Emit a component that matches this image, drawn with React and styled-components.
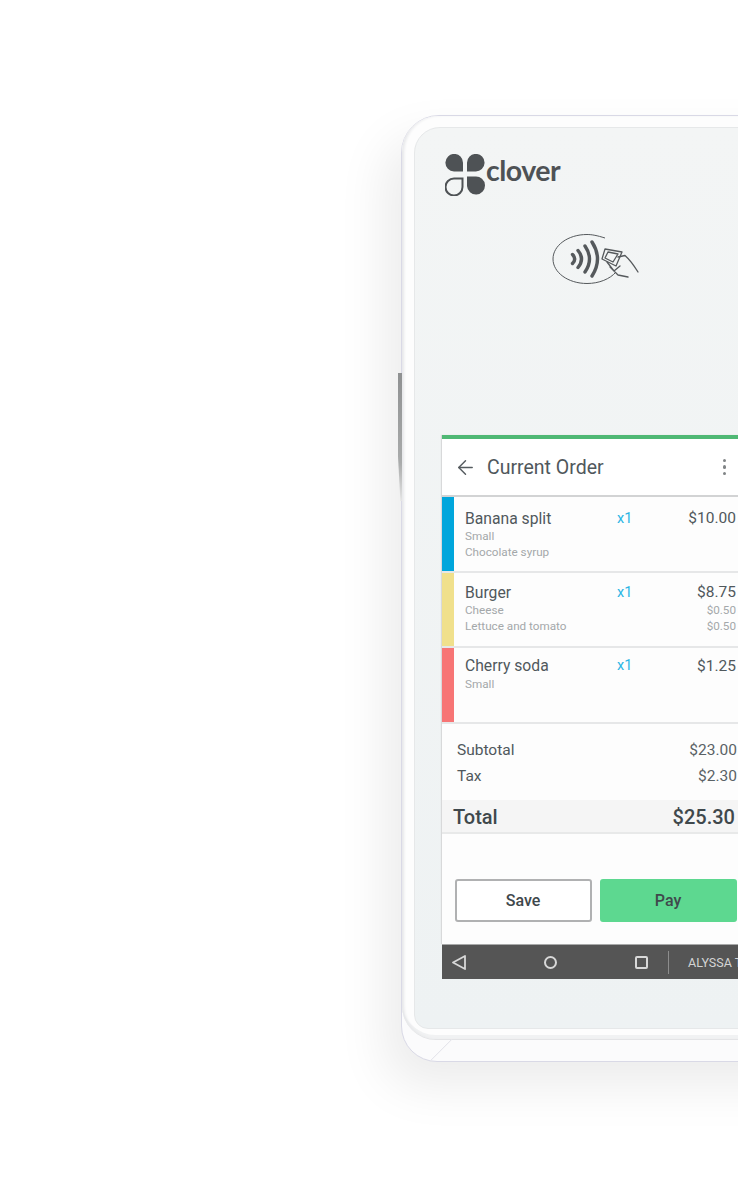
import React from 'react';
import styled, { createGlobalStyle } from 'styled-components';
import { ArrowLeft } from 'lucide-react';

const items = [
    { name: 'Banana split', color: '#00a6dc', pad: 10, price: '$10.00', mods: [['Small'], ['Chocolate syrup']] },
    { name: 'Burger', color: '#f0e08c', pad: 8.5, price: '$8.75', mods: [['Cheese', '$0.50'], ['Lettuce and tomato', '$0.50']] },
    { name: 'Cherry soda', color: '#f77575', pad: 6.5, price: '$1.25', mods: [['Small']] },
];

const Logo = () => (
    <LogoWrap>
        <svg width="40" height="42" viewBox="0 0 40 42">
            <path d="M18 17.500 H9 A8.800 8.800 0 1 1 18 8.800 Z" fill="#4e5255" />
            <path d="M22 17.500 H30.500 A8.800 8.800 0 1 0 22 8.800 Z" fill="#4e5255" />
            <path d="M17.500 24.500 H9 A8.500 8.500 0 1 0 17.500 33 Z" fill="none" stroke="#4e5255" strokeWidth="2" />
            <path d="M22 22.500 H30.500 A9 9 0 1 1 22 32 Z" fill="#4e5255" />
        </svg>
        <LogoWord>clover</LogoWord>
    </LogoWrap>
);

const ContactlessMark = () => (
    <NfcWrap>
        <svg width="90" height="60" viewBox="0 0 90 60" fill="none" stroke="#55595c">
            <path d="M55 8 C47 5.500 42 4.500 37 4.500 C18 4.500 3 15.500 3 29 C3 42.500 18 53.500 37 53.500 C49 53.500 60 49 66 42" strokeWidth="1" />
            <g strokeWidth="3.400" strokeLinecap="round">
                <path d="M22.500 24.500 Q27 29 22.500 33.500" />
                <path d="M28 20.500 Q35 29 28 37.500" />
                <path d="M35 16 Q44 29 35 42" />
                <path d="M42 12 Q53 29 42 46" />
            </g>
            <g strokeWidth="1.300" strokeLinejoin="round" strokeLinecap="round">
                <path d="M55 19 L72 22 L66 36 L52 29 Z" />
                <path d="M58 22 L68 24 L63 32 L55 28 Z" />
                <path d="M68 27 L75 25.500 C79 29 83 34 88 42" />
                <path d="M57 32 L64 41 L70 36 M60 37 L68 45 L78 47" />
            </g>
        </svg>
    </NfcWrap>
);

const App = () => (
    <Page>
        <GlobalStyle />
        <Device>
            <SideButton />
            <Shell>
                <Screen>
                    <Logo />
                    <ContactlessMark />
                    <Card>
                        <Header>
                            <ArrowLeft size={23} strokeWidth={1.5} color="#555b5f" />
                            <Title>Current Order</Title>
                            <Dots><i /><i /><i /></Dots>
                        </Header>
                        {items.map((item) => (
                            <Row key={item.name}>
                                <Strip $color={item.color} />
                                <RowBody $pad={item.pad}>
                                    <Line>
                                        <ItemName>{item.name}</ItemName>
                                        <Qty>x1</Qty>
                                        <Price>{item.price}</Price>
                                    </Line>
                                    {item.mods.map(([label, extra]) => (
                                        <ModLine key={label}>
                                            <span>{label}</span>
                                            {extra && <span>{extra}</span>}
                                        </ModLine>
                                    ))}
                                </RowBody>
                            </Row>
                        ))}
                        <Summary>
                            <SumLine><span>Subtotal</span><SumValue>$23.00</SumValue></SumLine>
                            <SumLine><span>Tax</span><SumValue>$2.30</SumValue></SumLine>
                        </Summary>
                        <TotalBar><span>Total</span><span>$25.30</span></TotalBar>
                        <Actions>
                            <SaveButton>Save</SaveButton>
                            <PayButton>Pay</PayButton>
                        </Actions>
                    </Card>
                    <NavBar>
                        <svg width="14" height="15" viewBox="0 0 14 15" fill="none" stroke="#d8d8d8" strokeWidth="1.800" strokeLinejoin="round">
                            <path d="M13 1 L1 7.500 L13 14 Z" />
                        </svg>
                        <CircleKey />
                        <SquareKey />
                        <NavDivider />
                        <NavUser>ALYSSA T.</NavUser>
                    </NavBar>
                </Screen>
            </Shell>
            <BaseCrease />
        </Device>
    </Page>
);

const GlobalStyle = createGlobalStyle`
    html, body {
        margin: 0;
        background: #fff;
    }
    * {
        box-sizing: border-box;
    }
`;

const Page = styled.div`
    width: 738px;
    height: 1189px;
    overflow: hidden;
    padding: 115px 0 0 401px;
    background: #fff;
    font-family: Roboto, sans-serif;
`;

const Device = styled.div`
    position: relative;
    width: 480px;
    height: 947px;
    background: #fbfbfc;
    border: 1px solid #d9d9e6;
    border-radius: 38px 0 0 36px;
    box-shadow: -16px 24px 50px rgba(0, 0, 0, 0.08);
`;

const SideButton = styled.div`
    position: absolute;
    left: -4px;
    top: 257px;
    width: 4px;
    height: 128px;
    background: linear-gradient(#8f9192, #a9abab 70%, #e4e4e4);
    clip-path: polygon(0 0, 100% 0, 100% 100%, 60% 100%, 0 65%);
`;

const Shell = styled.div`
    height: 924px;
    padding: 11px 0 10px 12px;
    background: #fdfdfd;
    border-radius: 36px 0 0 34px;
    border-bottom: 1px solid #e3e4e6;
    box-shadow: inset 3px 0 3px -1px #e6e7e9, inset 0 -4px 0 #f1f2f3;
`;

const Screen = styled.div`
    height: 100%;
    padding: 26px 0 0 27px;
    background: linear-gradient(#f3f5f5, #eef2f3);
    border: 1px solid #e6e8e9;
    border-radius: 26px 0 0 14px;
`;

const LogoWrap = styled.div`
    display: flex;
    align-items: center;
    gap: 1px;
    margin-left: 3px;
    height: 42px;
`;

const LogoWord = styled.span`
    font-family: Lato, sans-serif;
    font-size: 28.500px;
    font-weight: 700;
    color: #4e5255;
    letter-spacing: -0.5px;
    margin-top: -10px;
`;

const NfcWrap = styled.div`
    margin: 34px 0 0 108px;
    height: 60px;
`;

const Card = styled.div`
    width: 420px;
    height: 509px;
    margin-top: 145px;
    background: #fdfdfd;
    border-top: 4px solid #4fb874;
    box-shadow: -1px 0 1px #d8d9da;
`;

const Header = styled.div`
    display: flex;
    align-items: center;
    height: 58px;
    padding: 0 0 0 12px;
    background: #fff;
    border-bottom: 2px solid #d2d3d4;
`;

const Title = styled.h1`
    margin: 0 0 0 10px;
    font-size: 19.500px;
    font-weight: 400;
    color: #50585c;
`;

const Dots = styled.div`
    display: flex;
    flex-direction: column;
    gap: 3px;
    margin-left: 119px;

    i {
        width: 3.500px;
        height: 3.500px;
        border-radius: 50%;
        background: #808486;
    }
`;

const Row = styled.div`
    display: flex;
    height: 75.500px;
    background: #fdfdfd;
    border-bottom: 2px solid #e6e7e8;
`;

const Strip = styled.div`
    flex: none;
    width: 12px;
    background: ${(p) => p.$color};
`;

const RowBody = styled.div`
    width: 282px;
    padding: ${(p) => p.$pad}px 0 0 11px;
`;

const Line = styled.div`
    display: flex;
    align-items: center;
    height: 22px;
    font-size: 15.700px;
    color: #50585c;
`;

const ItemName = styled.span`
    width: 152px;
`;

const Qty = styled.span`
    color: #2ab5e4;
    font-size: 14.500px;
`;

const Price = styled.span`
    margin-left: auto;
    font-size: 15.500px;
`;

const ModLine = styled.div`
    display: flex;
    justify-content: space-between;
    height: 15.500px;
    line-height: 15.500px;
    font-size: 11.700px;
    color: #a4a8aa;
`;

const Summary = styled.div`
    width: 295px;
    padding: 13px 0 0 15px;
`;

const SumLine = styled.div`
    display: flex;
    justify-content: space-between;
    align-items: center;
    height: 26px;
    font-size: 15.500px;
    color: #50585c;
`;

const SumValue = styled.span`
    color: #5a6266;
`;

const TotalBar = styled.div`
    display: flex;
    justify-content: space-between;
    align-items: center;
    width: 420px;
    height: 34px;
    margin-top: 11px;
    padding: 2px 127px 0 11px;
    background: #f5f5f5;
    border-bottom: 2px solid #e8e9e9;
    font-size: 20px;
    font-weight: 500;
    color: #3f484c;
`;

const Actions = styled.div`
    display: flex;
    gap: 8px;
    margin-top: 45px;
    padding-left: 13px;
`;

const SaveButton = styled.button`
    width: 137px;
    height: 43px;
    padding: 1px 1px 0 0;
    background: #fff;
    border: 2px solid #b0b1b2;
    border-radius: 3px;
    font: 500 16px Roboto, sans-serif;
    color: #3f484c;
`;

const PayButton = styled(SaveButton)`
    background: #5dd890;
    border-color: #5dd890;
`;

const NavBar = styled.div`
    display: flex;
    align-items: center;
    width: 420px;
    height: 35px;
    padding-left: 10px;
    background: #555;
    border-top: 1px solid #a8a9a9;
`;

const CircleKey = styled.div`
    width: 13px;
    height: 13px;
    margin-left: 78px;
    border: 2px solid #d8d8d8;
    border-radius: 50%;
`;

const SquareKey = styled.div`
    width: 13px;
    height: 13px;
    margin-left: 78px;
    border: 2px solid #d8d8d8;
    border-radius: 2px;
`;

const NavDivider = styled.div`
    width: 1px;
    height: 23px;
    margin-left: 20px;
    background: #8d8d8d;
`;

const NavUser = styled.span`
    margin-left: 19px;
    font-size: 12.500px;
    color: #d4d4d4;
    white-space: nowrap;
`;

const BaseCrease = styled.div`
    position: absolute;
    left: 28px;
    bottom: 0;
    width: 22px;
    height: 22px;
    background: linear-gradient(to bottom right, transparent 49%, #e6e6ec 50%, transparent 53%);
`;

export default App;
